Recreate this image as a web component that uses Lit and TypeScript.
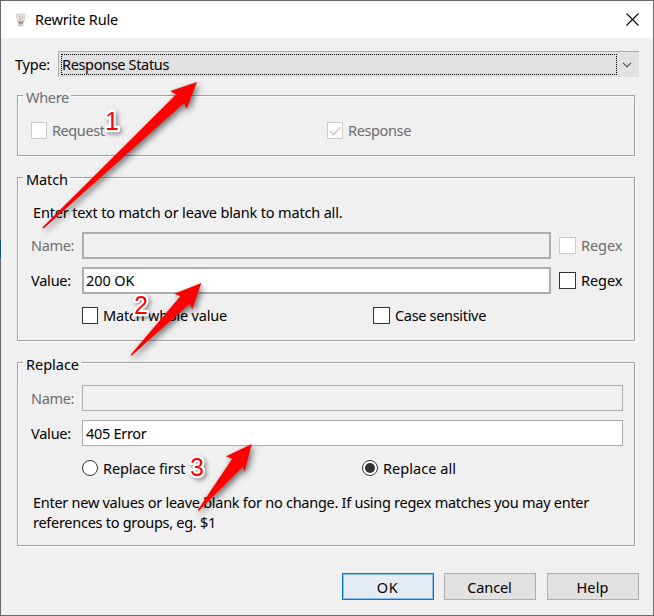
import { LitElement, html, css, svg } from "lit";
import { customElement, property } from "lit/decorators.js";
import { classMap } from "lit/directives/class-map.js";

/** One line of text tracked so that it fills a given advance width. */
@customElement("fit-text")
class FitText extends LitElement {
  @property({ type: Number }) w = 0;
  @property() text = "";
  static styles = css`
    :host { display: block; height: 20px; line-height: 20px; white-space: nowrap; flex: none; }
    span { display: inline-block; white-space: pre; }
  `;
  firstUpdated() {
    const span = this.renderRoot.querySelector("span")!;
    const natural = span.getBoundingClientRect().width;
    span.style.letterSpacing = `${(this.w - natural) / this.text.length}px`;
  }
  render() {
    return html`<span>${this.text}</span>`;
  }
}

@customElement("check-option")
class CheckOption extends LitElement {
  @property() label = "";
  @property({ type: Number }) w = 0;
  @property({ type: Boolean }) disabled = false;
  @property({ type: Boolean }) checked = false;
  @property({ type: Boolean }) wide = false;
  @property({ type: Boolean }) radio = false;
  static styles = css`
    :host { display: flex; }
    .row { display: flex; align-items: center; height: 17px; }
    .box { box-sizing: border-box; width: 16px; height: 17px; border: 1px solid #333; background: #fff; margin-right: 5px; flex: none; }
    .wide { width: 17px; }
    .off { color: #6d6d6d; }
    .off .box { border-color: #ccc; }
    .mark { display: block; width: 14px; height: 15px; }
    .radio { width: 16px; height: 16px; margin-right: 5px; flex: none; align-self: flex-start; }
    .label { margin-top: -1px; }
  `;
  render() {
    const mark = this.radio
      ? html`<svg class="radio" viewBox="0 0 16 16">
          <circle cx="8" cy="8" r="7.5" fill="#fff" stroke="#333"></circle>
          ${this.checked ? svg`<circle cx="8" cy="8" r="5" fill="#333"></circle>` : ""}
        </svg>`
      : html`<div class=${classMap({ box: true, wide: this.wide })}>
          ${this.checked
            ? html`<svg class="mark" viewBox="0 0 14 15"><path d="M2 8l3.6 3.6L12.3 4.3" fill="none" stroke="#ccc" stroke-width="1.6"></path></svg>`
            : ""}
        </div>`;
    return html`<div class=${classMap({ row: true, off: this.disabled })}>
      ${mark}<fit-text class="label" text=${this.label} w=${this.w}></fit-text>
    </div>`;
  }
}

@customElement("group-box")
class GroupBox extends LitElement {
  @property() legend = "";
  @property({ type: Number }) w = 0;
  @property({ type: Boolean }) disabled = false;
  static styles = css`
    :host { display: block; box-sizing: border-box; margin: 0 18px 0 17px; border: 1px solid #a0a0a0;
      box-shadow: 1px 1px 0 #fff, inset 1px 1px 0 #fff; }
    .legend { display: block; width: max-content; height: 20px; margin: -9px 0 0 5px; padding: 0 2px 0 3px; background: #f0f0f0; }
    .off { color: #6d6d6d; }
  `;
  render() {
    return html`<div class=${classMap({ legend: true, off: this.disabled })}>
        <fit-text text=${this.legend} w=${this.w}></fit-text>
      </div>
      <slot></slot>`;
  }
}

const arrows = [
  "197,82 170.3,91 176,94.5 42.4,227.4 43.6,228.4 184,103 186.7,108.8",
  "201.3,283 174.3,293.7 180.3,296.2 130.4,355 131.4,355.8 189.5,304 192.3,309.3",
  "251.7,444 226,456.3 232,459 197.6,510.3 198.6,511 242.7,467 244.7,471.7",
];
const steps = [
  { n: "1", x: 112, y: 130 },
  { n: "2", x: 141, y: 314 },
  { n: "3", x: 197, y: 476 },
];

@customElement("app-root")
class AppRoot extends LitElement {
  static styles = css`
    :host { display: block; position: relative; width: 654px; height: 616px; overflow: hidden;
      font: 14.5px/20px "Noto Sans", "Open Sans", sans-serif; color: #000; }
    .window { box-sizing: border-box; width: 654px; height: 616px; border: 1px solid #696969; background: #f0f0f0; }
    .inner { margin: 0 0 0 -1px; }
    .bar { box-sizing: border-box; display: flex; align-items: center; height: 37px; margin-left: 1px; padding: 0 14px 0 13px; background: #fff; }
    .app { width: 16px; height: 16px; margin-right: 5px; }
    .title { margin-top: -1px; }
    .close { width: 13px; height: 13px; margin-left: auto; }
    .type { display: flex; align-items: center; height: 26px; margin: 13px 15px 18px 15px; }
    .combo { box-sizing: border-box; display: flex; align-items: center; flex: none; width: 581px; height: 26px; margin-left: 8px; padding-left: 2px;
      background: #e1e1e1; border: solid #adadad; border-width: 1px 0 0 1px; }
    .focus { box-sizing: border-box; display: flex; align-items: center; width: 556px; height: 21px; border: 1px dotted #000; }
    .focus fit-text { margin-top: -1px; }
    .chev { width: 10px; height: 6px; margin: 1px 0 0 5px; }
    .where { height: 61px; margin-bottom: 21px; }
    .match { height: 164px; margin-bottom: 21px; }
    .replace { height: 184px; margin-bottom: 27px; }
    .options { display: flex; }
    .where .options { margin: 15px 0 0 13px; }
    .match .options { margin: 13px 0 0 64px; }
    .replace .options { margin: 14px 0 0 64px; }
    .a { width: 296px; } .b { width: 291px; } .c { width: 280px; }
    .note { margin: 13px 0 0 15px; }
    .help { margin: 15px 0 0 15px; }
    .field { display: flex; align-items: center; height: 27px; margin: 8px 0 0 13px; }
    .first { margin-top: 10px; }
    .match .field fit-text { margin-top: -1px; }
    .replace .field { height: 26px; margin-top: 9px; }
    .replace .first { margin-top: 11px; }
    .cap { width: 51px; flex: none; }
    .off { color: #6d6d6d; }
    .input { box-sizing: border-box; display: flex; align-items: center; width: 469px; height: 27px; padding-left: 2px; margin-right: 8px;
      border: 2px solid #abadb3; background: #fff; }
    .replace .input { width: 541px; height: 26px; border-width: 1px; padding-left: 3px; }
    .off .input { background: #f0f0f0; }
    .actions { display: flex; justify-content: flex-end; padding-right: 14px; }
    .btn { box-sizing: border-box; display: flex; align-items: center; justify-content: center; width: 92px; height: 27px; margin-left: 10px;
      border: 1px solid #adadad; background: #e1e1e1; padding: 1px 1px 0 0; }
    .last { margin-left: 11px; }
    .ok { border-color: #0078d7; background: #e5ebf3; box-shadow: inset 0 0 0 1px #89c0ee; }
    .marks { position: absolute; left: 0; top: 0; width: 654px; height: 616px; pointer-events: none; }
    .arrow { fill: #f00; filter: drop-shadow(2px 3px 3px rgba(0, 0, 0, 0.55)); }
    .step { font: 25px "Liberation Sans", Arial, sans-serif; text-anchor: middle; fill: #f00; stroke: #fff; stroke-width: 4.5px;
      stroke-linejoin: round; paint-order: stroke; filter: drop-shadow(2px 2px 2px rgba(0, 0, 0, 0.4)); }
  `;

  field(label: string, w: number, value: string, vw: number, off: boolean, first: boolean, regex: boolean) {
    return html`<div class=${classMap({ field: true, off, first })}>
      <fit-text class="cap" text=${label} w=${w}></fit-text>
      <div class="input">${value ? html`<fit-text text=${value} w=${vw}></fit-text>` : ""}</div>
      ${regex ? html`<check-option wide label="Regex" w="41.5" ?disabled=${off}></check-option>` : ""}
    </div>`;
  }

  render() {
    return html`
      <div class="window"><div class="inner">
        <div class="bar">
          <svg class="app" viewBox="0 0 16 16">
            <path d="M2 2.5Q7 1 11 2.5L10 9.5H3.5z" fill="#e6e6e2" stroke="#bbb" stroke-width=".7"></path>
            <path d="M11 2.5q3-1.5 2.8 3" fill="none" stroke="#ddd"></path>
            <path d="M3.5 9.5h6.5L8.5 12H5z" fill="#999"></path>
            <path d="M4 13.2h5.5" stroke="#c4c4c4" stroke-width="2"></path>
            <circle cx="5.5" cy="4.5" r="1" fill="#e9a08c"></circle><circle cx="8.3" cy="5.5" r="1" fill="#8cc58c"></circle>
            <circle cx="6" cy="7.5" r="1" fill="#b6a0d8"></circle><circle cx="8.5" cy="8" r=".8" fill="#e6cf78"></circle>
          </svg>
          <fit-text class="title" text="Rewrite Rule" w="83"></fit-text>
          <svg class="close" viewBox="0 0 13 13"><path d="M.5.5l12 12M12.5.5l-12 12" stroke="#000" stroke-width="1.1"></path></svg>
        </div>
        <div class="type">
          <fit-text text="Type:" w="35"></fit-text>
          <div class="combo">
            <div class="focus"><fit-text text="Response Status" w="107"></fit-text></div>
            <svg class="chev" viewBox="0 0 10 6"><path d="M1 .8l4 4 4-4" fill="none" stroke="#444" stroke-width="1.1"></path></svg>
          </div>
        </div>
        <group-box class="where" legend="Where" w="43" disabled>
          <div class="options">
            <check-option class="a" label="Request" w="52.5" disabled></check-option>
            <check-option label="Response" w="63" disabled checked></check-option>
          </div>
        </group-box>
        <group-box class="match" legend="Match" w="42">
          <fit-text class="note" text="Enter text to match or leave blank to match all." w="309.5"></fit-text>
          ${this.field("Name:", 43, "", 0, true, true, true)}
          ${this.field("Value:", 40, "200 OK", 48.5, false, false, true)}
          <div class="options">
            <check-option class="b" label="Match whole value" w="124"></check-option>
            <check-option wide label="Case sensitive" w="91"></check-option>
          </div>
        </group-box>
        <group-box class="replace" legend="Replace" w="53">
          ${this.field("Name:", 43, "", 0, true, true, false)}
          ${this.field("Value:", 40, "405 Error", 60.5, false, false, false)}
          <div class="options">
            <check-option class="c" radio label="Replace first" w="82.5"></check-option>
            <check-option radio checked label="Replace all" w="73"></check-option>
          </div>
          <div class="help">
            <fit-text text="Enter new values or leave blank for no change. If using regex matches you may enter" w="556"></fit-text>
            <fit-text text="references to groups, eg. $1" w="183"></fit-text>
          </div>
        </group-box>
        <div class="actions">
          <div class="btn ok"><fit-text text="OK" w="21.5"></fit-text></div>
          <div class="btn"><fit-text text="Cancel" w="44.5"></fit-text></div>
          <div class="btn last"><fit-text text="Help" w="32"></fit-text></div>
        </div>
      </div></div>
      <svg class="marks" viewBox="0 0 654 616">
        <rect x="0" y="240" width="1" height="18" fill="#0f4a78"></rect>
        ${arrows.map((p) => svg`<polygon class="arrow" points=${p}></polygon>`)}
        ${steps.map((s) => svg`<text class="step" x=${s.x} y=${s.y}>${s.n}</text>`)}
      </svg>`;
  }
}
